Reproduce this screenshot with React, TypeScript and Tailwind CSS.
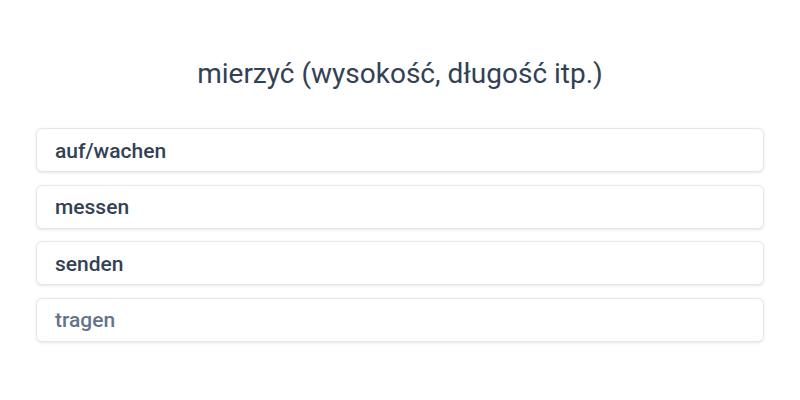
import React from 'react';

const options = [
  { id: 1, label: 'auf/wachen', muted: false },
  { id: 2, label: 'messen', muted: false },
  { id: 3, label: 'senden', muted: false },
  { id: 4, label: 'tragen', muted: true },
];

export default function App() {
  return (
    <div className="w-[800px] h-[400px] bg-white px-9 pt-[56px]" style={{ fontFamily: 'Roboto, sans-serif' }}>
      <h1 className="text-center text-[28px] leading-[36px] text-[#334155]">
        mierzyć (wysokość, długość itp.)
      </h1>
      <div className="mt-[36px] flex flex-col gap-[12.5px]">
        {options.map((o) => (
          <div
            key={o.id}
            className="h-[44px] flex items-center px-[18px] pt-[3px] bg-white border border-[#e5e7eb] rounded-md shadow-[0_1px_3px_rgba(0,0,0,0.1)]"
          >
            <span className={`text-[21px] font-medium ${o.muted ? 'text-[#64748b]' : 'text-[#334155]'}`}>
              {o.label}
            </span>
          </div>
        ))}
      </div>
    </div>
  );
}
